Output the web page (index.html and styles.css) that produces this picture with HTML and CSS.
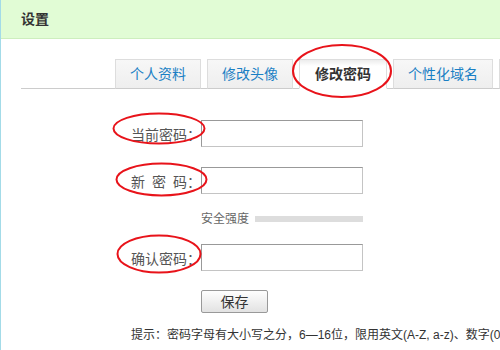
FILE: index.html
```html
<!DOCTYPE html>
<html lang="zh-CN">
<head>
  <meta charset="UTF-8">
  <title>设置</title>
  <link rel="stylesheet" href="styles.css">
</head>
<body>
  <div class="page">
    <div class="header">设置</div>
    <div class="main">
      <div class="tabs">
        <a class="tab">个人资料</a>
        <a class="tab">修改头像</a>
        <a class="tab active">修改密码</a>
        <a class="tab">个性化域名</a>
        <a class="tab">隐私</a>
      </div>
      <form class="form">
        <div class="row">
          <label class="label">当前密码：</label>
          <input class="input" type="password">
        </div>
        <div class="row">
          <label class="label">新&ensp;密&ensp;码：</label>
          <input class="input" type="password">
        </div>
        <div class="row strength">
          <span class="label"></span>
          <span class="strength-text">安全强度</span>
          <span class="strength-bar"></span>
        </div>
        <div class="row">
          <label class="label">确认密码：</label>
          <input class="input" type="password">
        </div>
        <div class="row submit">
          <span class="label"></span>
          <button class="btn" type="button">保存</button>
        </div>
        <p class="hint">提示：密码字母有大小写之分，6—16位，限用英文(A-Z, a-z)、数字(0-9)和特殊字符</p>
      </form>
    </div>

    <!-- red annotation circles -->
    <svg class="marks" width="500" height="350" viewBox="0 0 500 350">
      <ellipse cx="342" cy="71" rx="49" ry="26" />
      <ellipse cx="159" cy="128.5" rx="45.5" ry="15" />
      <ellipse cx="161.5" cy="179.5" rx="45" ry="16" />
      <ellipse cx="159" cy="254" rx="41.5" ry="18.5" />
    </svg>
  </div>
</body>
</html>
```

FILE: styles.css
```css
body {
  margin: 0;
  padding: 0;
  background: #fff;
  font-family: "Liberation Sans", "Noto Sans CJK SC", sans-serif;
  color: #333;
  overflow: hidden;
}
.page {
  position: relative;
  width: 499px;
  height: 350px;
  border-left: 1px solid #a3dbe8;
  overflow: hidden;
}
.header {
  height: 38px;
  line-height: 38px;
  padding-left: 20px;
  background: #e1fcd5;
  border-bottom: 1px solid #cdeebe;
  font-size: 14px;
  font-weight: bold;
  color: #333;
}
.main {
  margin-left: 20px;
}
.tabs {
  display: flex;
  gap: 6px;
  margin-top: 20px;
  padding-left: 94px;
  border-bottom: 1px solid #ccc;
  white-space: nowrap;
}
.tab {
  display: block;
  flex-shrink: 0;
  height: 28px;
  line-height: 28px;
  padding: 0 14px;
  margin-bottom: -1px;
  border: 1px solid #ddd;
  border-bottom-color: #ccc;
  background: linear-gradient(to bottom, #f7f7f7, #eeeeee);
  font-size: 14px;
  color: #1a7fc4;
}
.tab.active {
  background: linear-gradient(to bottom, #ececec 0, #fff 6px, #fff);
  border-bottom-color: #fff;
  font-weight: bold;
  color: #333;
  padding: 0 15px;
}
.form {
  margin: 31px 0 0;
}
.row {
  display: flex;
  align-items: center;
  margin-bottom: 20px;
}
.label {
  width: 180px;
  flex-shrink: 0;
  text-align: right;
  font-size: 14px;
  color: #555;
}
.input {
  box-sizing: border-box;
  width: 162px;
  height: 27px;
  padding: 0 4px;
  border: 1px solid #c4c4c4;
  border-top-color: #999;
  border-left-color: #999;
  background: #fff;
  outline: none;
}
.strength {
  height: 12px;
  margin-top: -1px;
  margin-bottom: 19px;
}
.strength-text {
  font-size: 12px;
  line-height: 12px;
  color: #666;
}
.strength-bar {
  width: 108px;
  height: 6px;
  margin-left: 6px;
  background: #ddd;
}
.submit {
  margin-top: -1px;
}
.btn {
  width: 67px;
  height: 23px;
  padding: 0;
  border: 1px solid #999;
  border-radius: 2px;
  background: linear-gradient(to bottom, #fefefe, #e2e2e2);
  font-family: "Noto Sans CJK SC", sans-serif;
  font-size: 14px;
  line-height: 21px;
  color: #333;
}
.hint {
  margin: -6px 0 0 110px;
  font-size: 12px;
  line-height: 16px;
  color: #333;
  white-space: nowrap;
}
.marks {
  position: absolute;
  top: 0;
  left: -1px;
  pointer-events: none;
}
.marks ellipse {
  fill: none;
  stroke: #e8131a;
  stroke-width: 2;
}
```
